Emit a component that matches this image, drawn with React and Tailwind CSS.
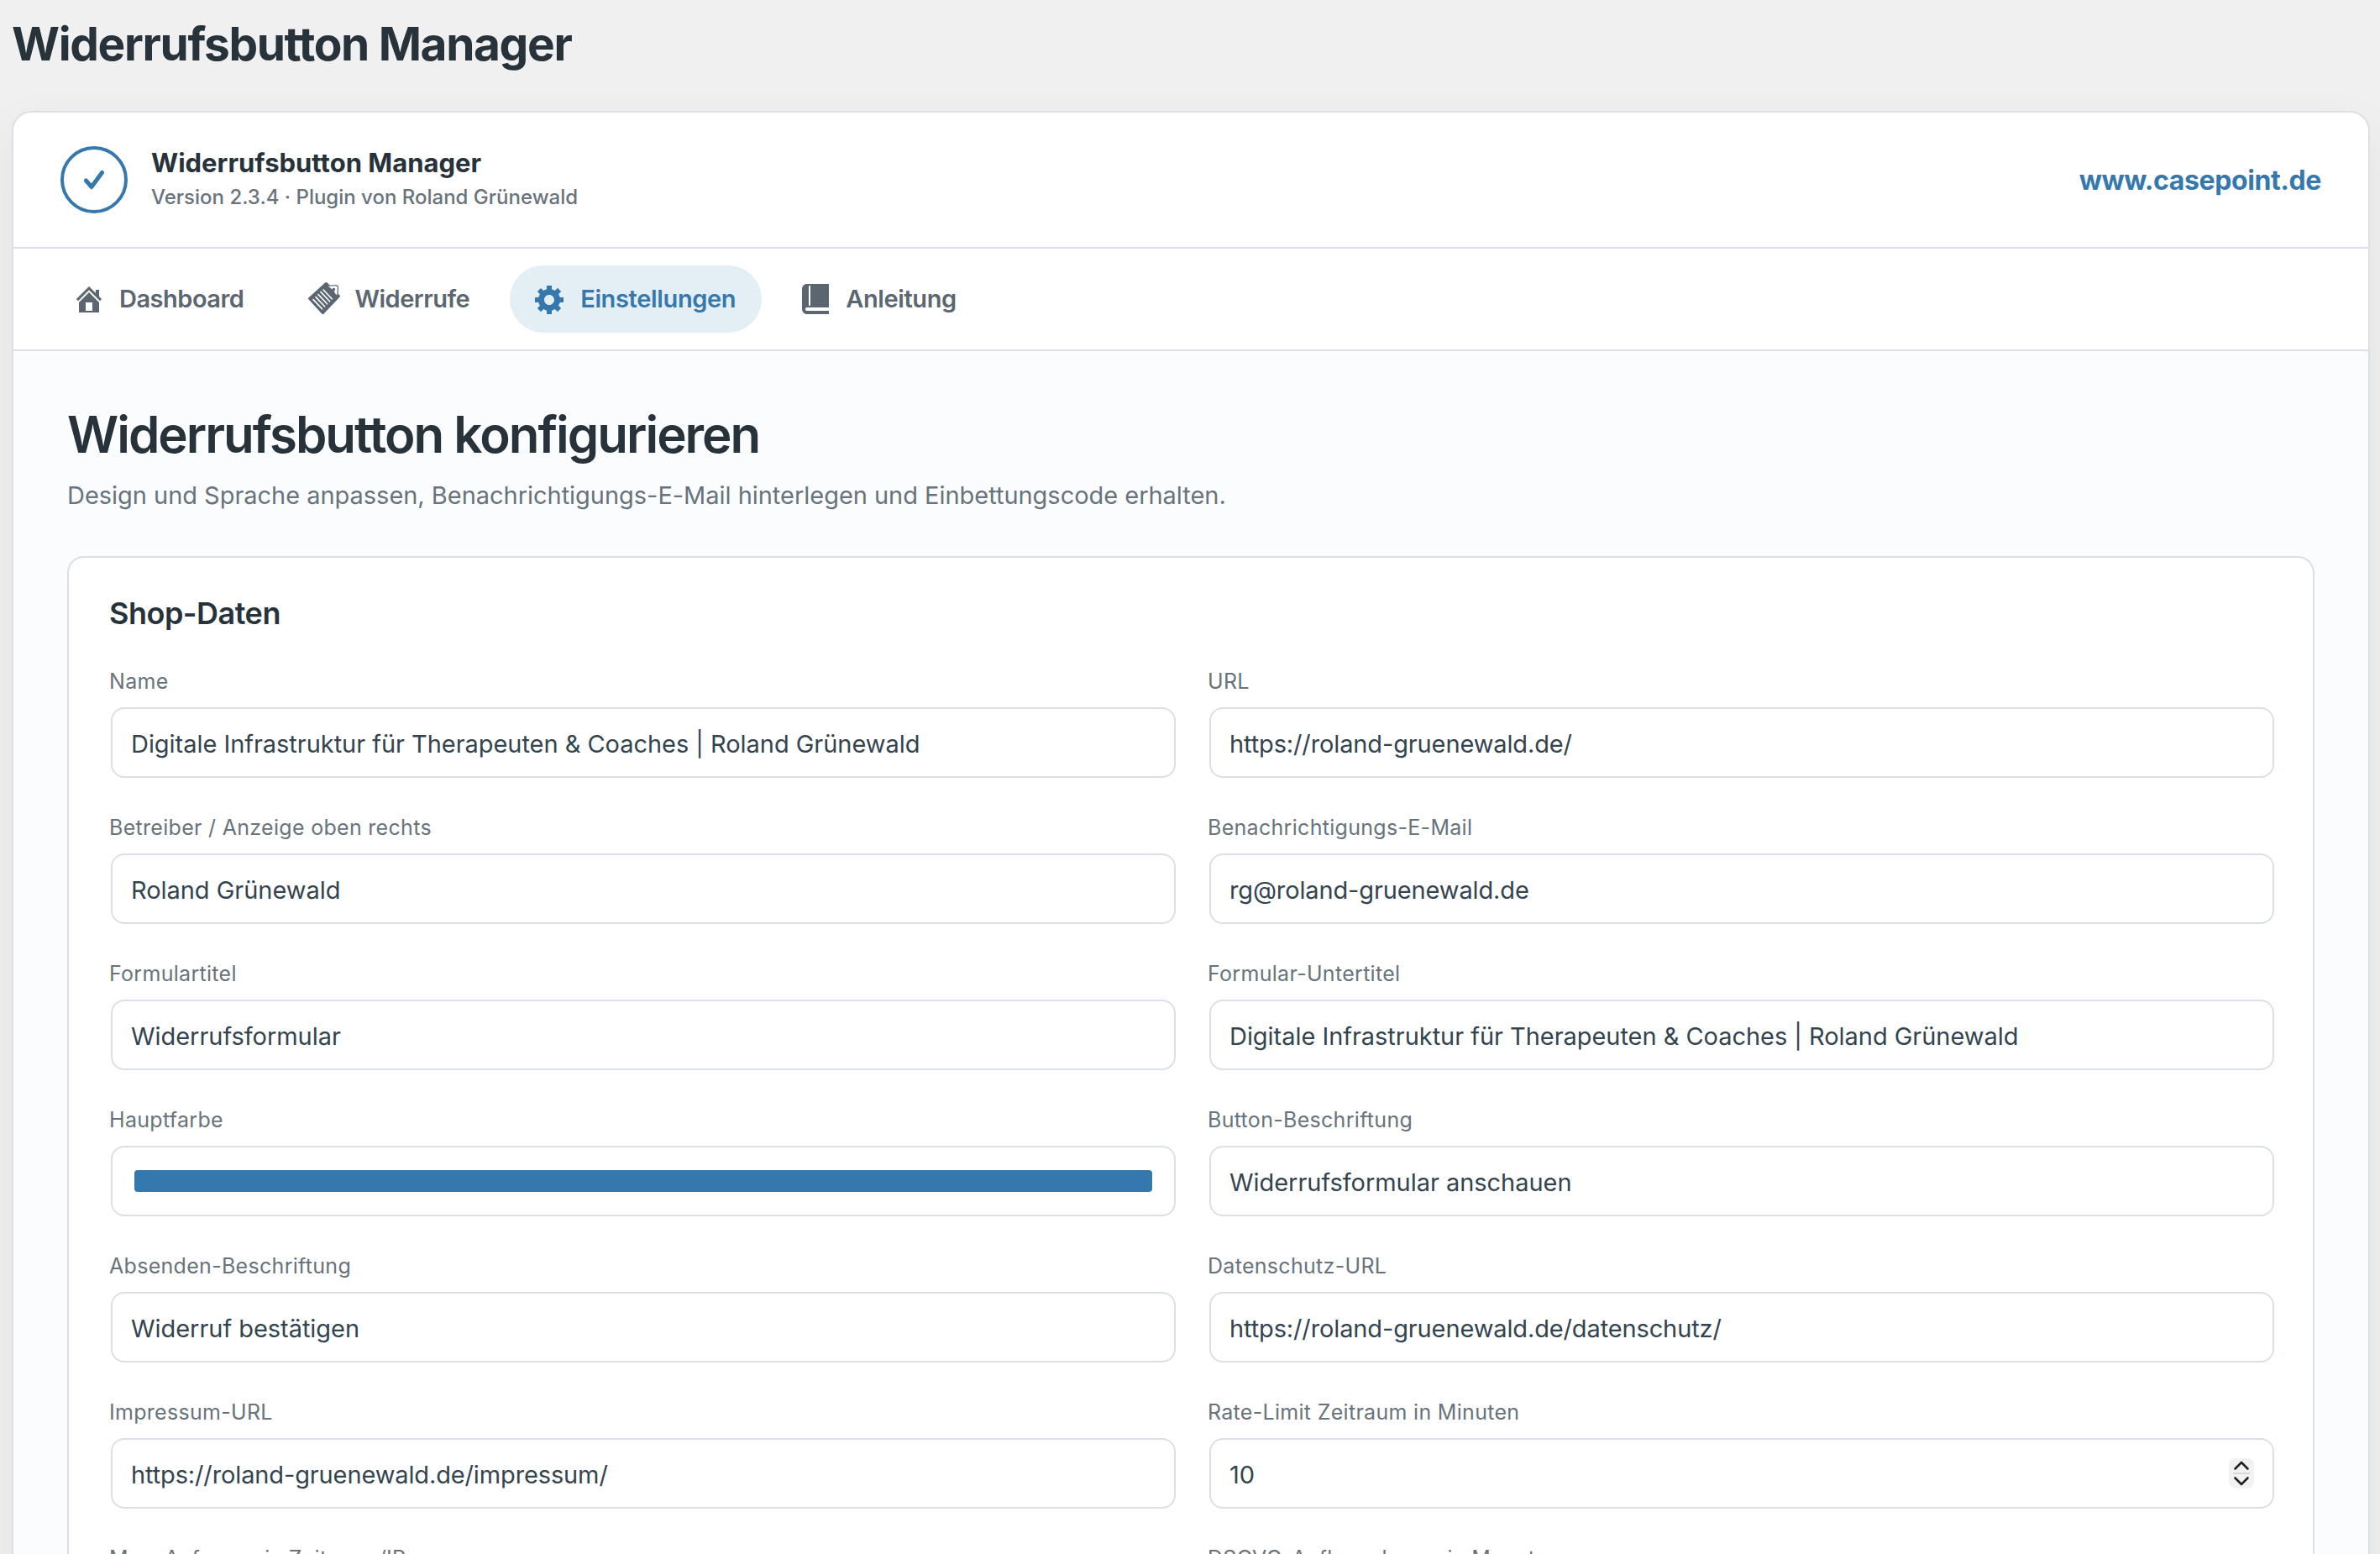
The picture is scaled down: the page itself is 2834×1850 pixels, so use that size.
import clsx from "clsx";

const tabs = [
  { label: "Dashboard", icon: "home", text: "tracking-[-0.5px]" },
  { label: "Widerrufe", icon: "tag", text: "tracking-[-0.5px]" },
  { label: "Einstellungen", icon: "gear", active: true, text: "tracking-[-0.35px]" },
  { label: "Anleitung", icon: "book", text: "tracking-[-0.4px]" },
];

const fields = [
  { label: "Name", value: "Digitale Infrastruktur für Therapeuten & Coaches | Roland Grünewald" },
  { label: "URL", value: "https://roland-gruenewald.de/", type: "url" },
  { label: "Betreiber / Anzeige oben rechts", value: "Roland Grünewald" },
  { label: "Benachrichtigungs-E-Mail", value: "rg@roland-gruenewald.de", type: "url" },
  { label: "Formulartitel", value: "Widerrufsformular" },
  { label: "Formular-Untertitel", value: "Digitale Infrastruktur für Therapeuten & Coaches | Roland Grünewald" },
  { label: "Hauptfarbe", type: "color" },
  { label: "Button-Beschriftung", value: "Widerrufsformular anschauen" },
  { label: "Absenden-Beschriftung", value: "Widerruf bestätigen" },
  { label: "Datenschutz-URL", value: "https://roland-gruenewald.de/datenschutz/", type: "url" },
  { label: "Impressum-URL", value: "https://roland-gruenewald.de/impressum/", type: "url" },
  { label: "Rate-Limit Zeitraum in Minuten", value: "10", type: "number" },
  { label: "Max. Anfragen je Zeitraum/IP", value: "5", type: "number" },
  { label: "DSGVO-Aufbewahrung in Monaten", value: "36", type: "number" },
];

function TabIcon({ name }) {
  return (
    <svg viewBox="0 0 20 20" className="size-10 shrink-0" fill="currentColor">
      {name === "home" && (
        <path d="M16 8.5l1.53 1.53-1.06 1.06L10 4.6l-6.47 6.49-1.06-1.06L10 2.5l4 4v-2h2v4zm-6-2.46l6 5.99V18H4v-5.97zM12 17v-5H8v5h4z" />
      )}
      {name === "tag" && (
        <>
          <path d="M10.6.3q.6-.6 1.200 0l7.400 7.400q.6.6 0 1.200L9.800 18.700q-.6.6-1.200 0L.8 10.300q-.6-.6 0-1.200z" />
          <path
            d="M12.200 2.200 17.100 2q1 0 1 1l-.1 5-1.600-1.500-.4-1.200-2-1.700z"
            fill="#fff"
          />
          <path d="M12.200 2 17.100 1.900q1.100 0 1.100 1.100l-.2 5" fill="none" stroke="currentColor" strokeWidth=".6" />
          <circle cx="15.700" cy="4.300" r=".9" />
          <path
            d="M3.500 10.300l5.300 5.600M5 8.800l5.300 5.600M6.500 7.300l5.300 5.600M8 5.800l5.300 5.600M9.500 4.500l5.100 5.400"
            fill="none"
            stroke="#fff"
            strokeWidth=".8"
            strokeLinecap="round"
          />
        </>
      )}
      {name === "gear" && (
        <path d="M18 12h-2.18c-.17.7-.44 1.35-.81 1.93l1.54 1.54-2.1 2.1-1.54-1.54c-.58.36-1.23.63-1.91.79V19H8v-2.18c-.68-.16-1.33-.43-1.91-.79l-1.54 1.54-2.12-2.12 1.54-1.54c-.36-.58-.63-1.23-.79-1.91H1V9.03h2.17c.16-.7.44-1.35.8-1.94L2.43 5.55l2.1-2.1 1.54 1.54c.58-.37 1.24-.64 1.93-.81V2h3v2.18c.68.16 1.33.43 1.91.79l1.54-1.54 2.12 2.12-1.54 1.54c.36.59.64 1.24.8 1.94H18V12zm-8.5 1.5c1.66 0 3-1.34 3-3s-1.34-3-3-3-3 1.34-3 3 1.34 3 3 3z" />
      )}
      {name === "book" && (
        <path d="M5 17h13v2H5c-1.66 0-3-1.34-3-3V4c0-1.66 1.34-3 3-3h13v14H5c-.55 0-1 .45-1 1s.45 1 1 1zm2-3.5v-11c0-.28-.22-.5-.5-.5s-.5.22-.5.5v11c0 .28.22.5.5.5s.5-.22.5-.5z" />
      )}
    </svg>
  );
}

function Stepper() {
  return (
    <svg viewBox="0 0 30 36" className="h-9 w-[30px]" fill="none">
      <rect width="30" height="36" rx="8" fill="#f2f2f2" />
      <path d="M5 18h20" stroke="#dadada" strokeWidth="2" />
      <path d="M7.5 12.5 15 5l7.5 7.5M7.5 23.5 15 31l7.5-7.5" stroke="#222" strokeWidth="2.6" strokeLinecap="round" strokeLinejoin="round" />
    </svg>
  );
}

function Field({ label, value, type }) {
  return (
    <div className="h-[174px]">
      <div className="h-[50px] text-[25px] leading-[38px] tracking-[0.3px] text-[#68737c]">{label}</div>
      <div className="ml-0.5 -mr-0.5 flex h-[84px] items-center justify-between rounded-2xl border-2 border-[#dae0e5] bg-white px-[22px] text-[29px] text-[#34444f]">
        {type === "color" ? (
          <div className="mx-1 h-[26px] w-full rounded bg-[#3578ad]" />
        ) : (
          <span className={clsx("pt-[3px]", type === "url" ? "tracking-[-0.13px]" : "tracking-[-0.04px]")}>
            {value}
          </span>
        )}
        {type === "number" && <Stepper />}
      </div>
    </div>
  );
}

function App() {
  return (
    <div className="h-[1850px] overflow-hidden bg-[#f0f0f1] pl-3.5 pr-3 font-['Inter',sans-serif] text-[#27323a]">
      <h1 className="h-[132px] pt-[17px] text-[55px] leading-[70px] font-bold tracking-[-1.35px]">
        Widerrufsbutton Manager
      </h1>

      <div className="h-[1900px] overflow-hidden rounded-3xl border-2 border-[#dae0e5] bg-[#fbfcfe] shadow-[0_20px_60px_rgba(0,0,0,0.06)]">
        <header className="flex h-[162px] items-center justify-between border-b-2 border-[#dae0e5] bg-white px-14">
          <div className="flex items-center gap-7">
            <div className="flex size-20 items-center justify-center rounded-full border-4 border-[#3578ad]">
              <svg viewBox="0 0 24 24" className="size-6" fill="none" stroke="#3578ad" strokeWidth="5" strokeLinecap="round" strokeLinejoin="round">
                <path d="M2.5 13 9 20.500 21.500 3.500" />
              </svg>
            </div>
            <div>
              <div className="text-[31px] leading-[41px] font-bold">Widerrufsbutton Manager</div>
              <div className="text-[24px] leading-[41px] font-medium text-[#68737c]">
                Version 2.3.4 · Plugin von Roland Grünewald
              </div>
            </div>
          </div>
          <a className="pt-0.5 text-[32px] font-bold tracking-[-0.4px] text-[#3578ad]">www.casepoint.de</a>
        </header>

        <nav className="flex h-[122px] items-center gap-4 border-b-2 border-[#dae0e5] bg-white px-[42px]">
          {tabs.map((tab) => (
            <div
              key={tab.label}
              className={clsx(
                "flex h-20 items-center gap-4 rounded-full pl-7 text-[29px] font-semibold",
                tab.active ? "bg-[#e3eef5] pr-[31px] text-[#3578ad]" : "pr-8 text-[#5b6670]"
              )}
            >
              <TabIcon name={tab.icon} />
              <span className={tab.text}>{tab.label}</span>
            </div>
          ))}
        </nav>

        <main className="px-16 pt-[60px]">
          <h2 className="text-[60px] leading-[78px] font-semibold tracking-[-2px]">Widerrufsbutton konfigurieren</h2>
          <p className="mt-3 h-[94px] text-[29px] leading-[44px] tracking-[-0.03px] text-[#68737c]">
            Design und Sprache anpassen, Benachrichtigungs-E-Mail hinterlegen und Einbettungscode erhalten.
          </p>

          <section className="rounded-[20px] border-2 border-[#dae0e5] bg-white px-12 pt-10">
            <h3 className="h-[88px] text-[36px] leading-[52px] font-semibold tracking-[-0.5px]">Shop-Daten</h3>
            <div className="grid grid-cols-2 gap-x-10">
              {fields.map((field) => (
                <Field key={field.label} {...field} />
              ))}
            </div>
          </section>
        </main>
      </div>
    </div>
  );
}

export default App;
